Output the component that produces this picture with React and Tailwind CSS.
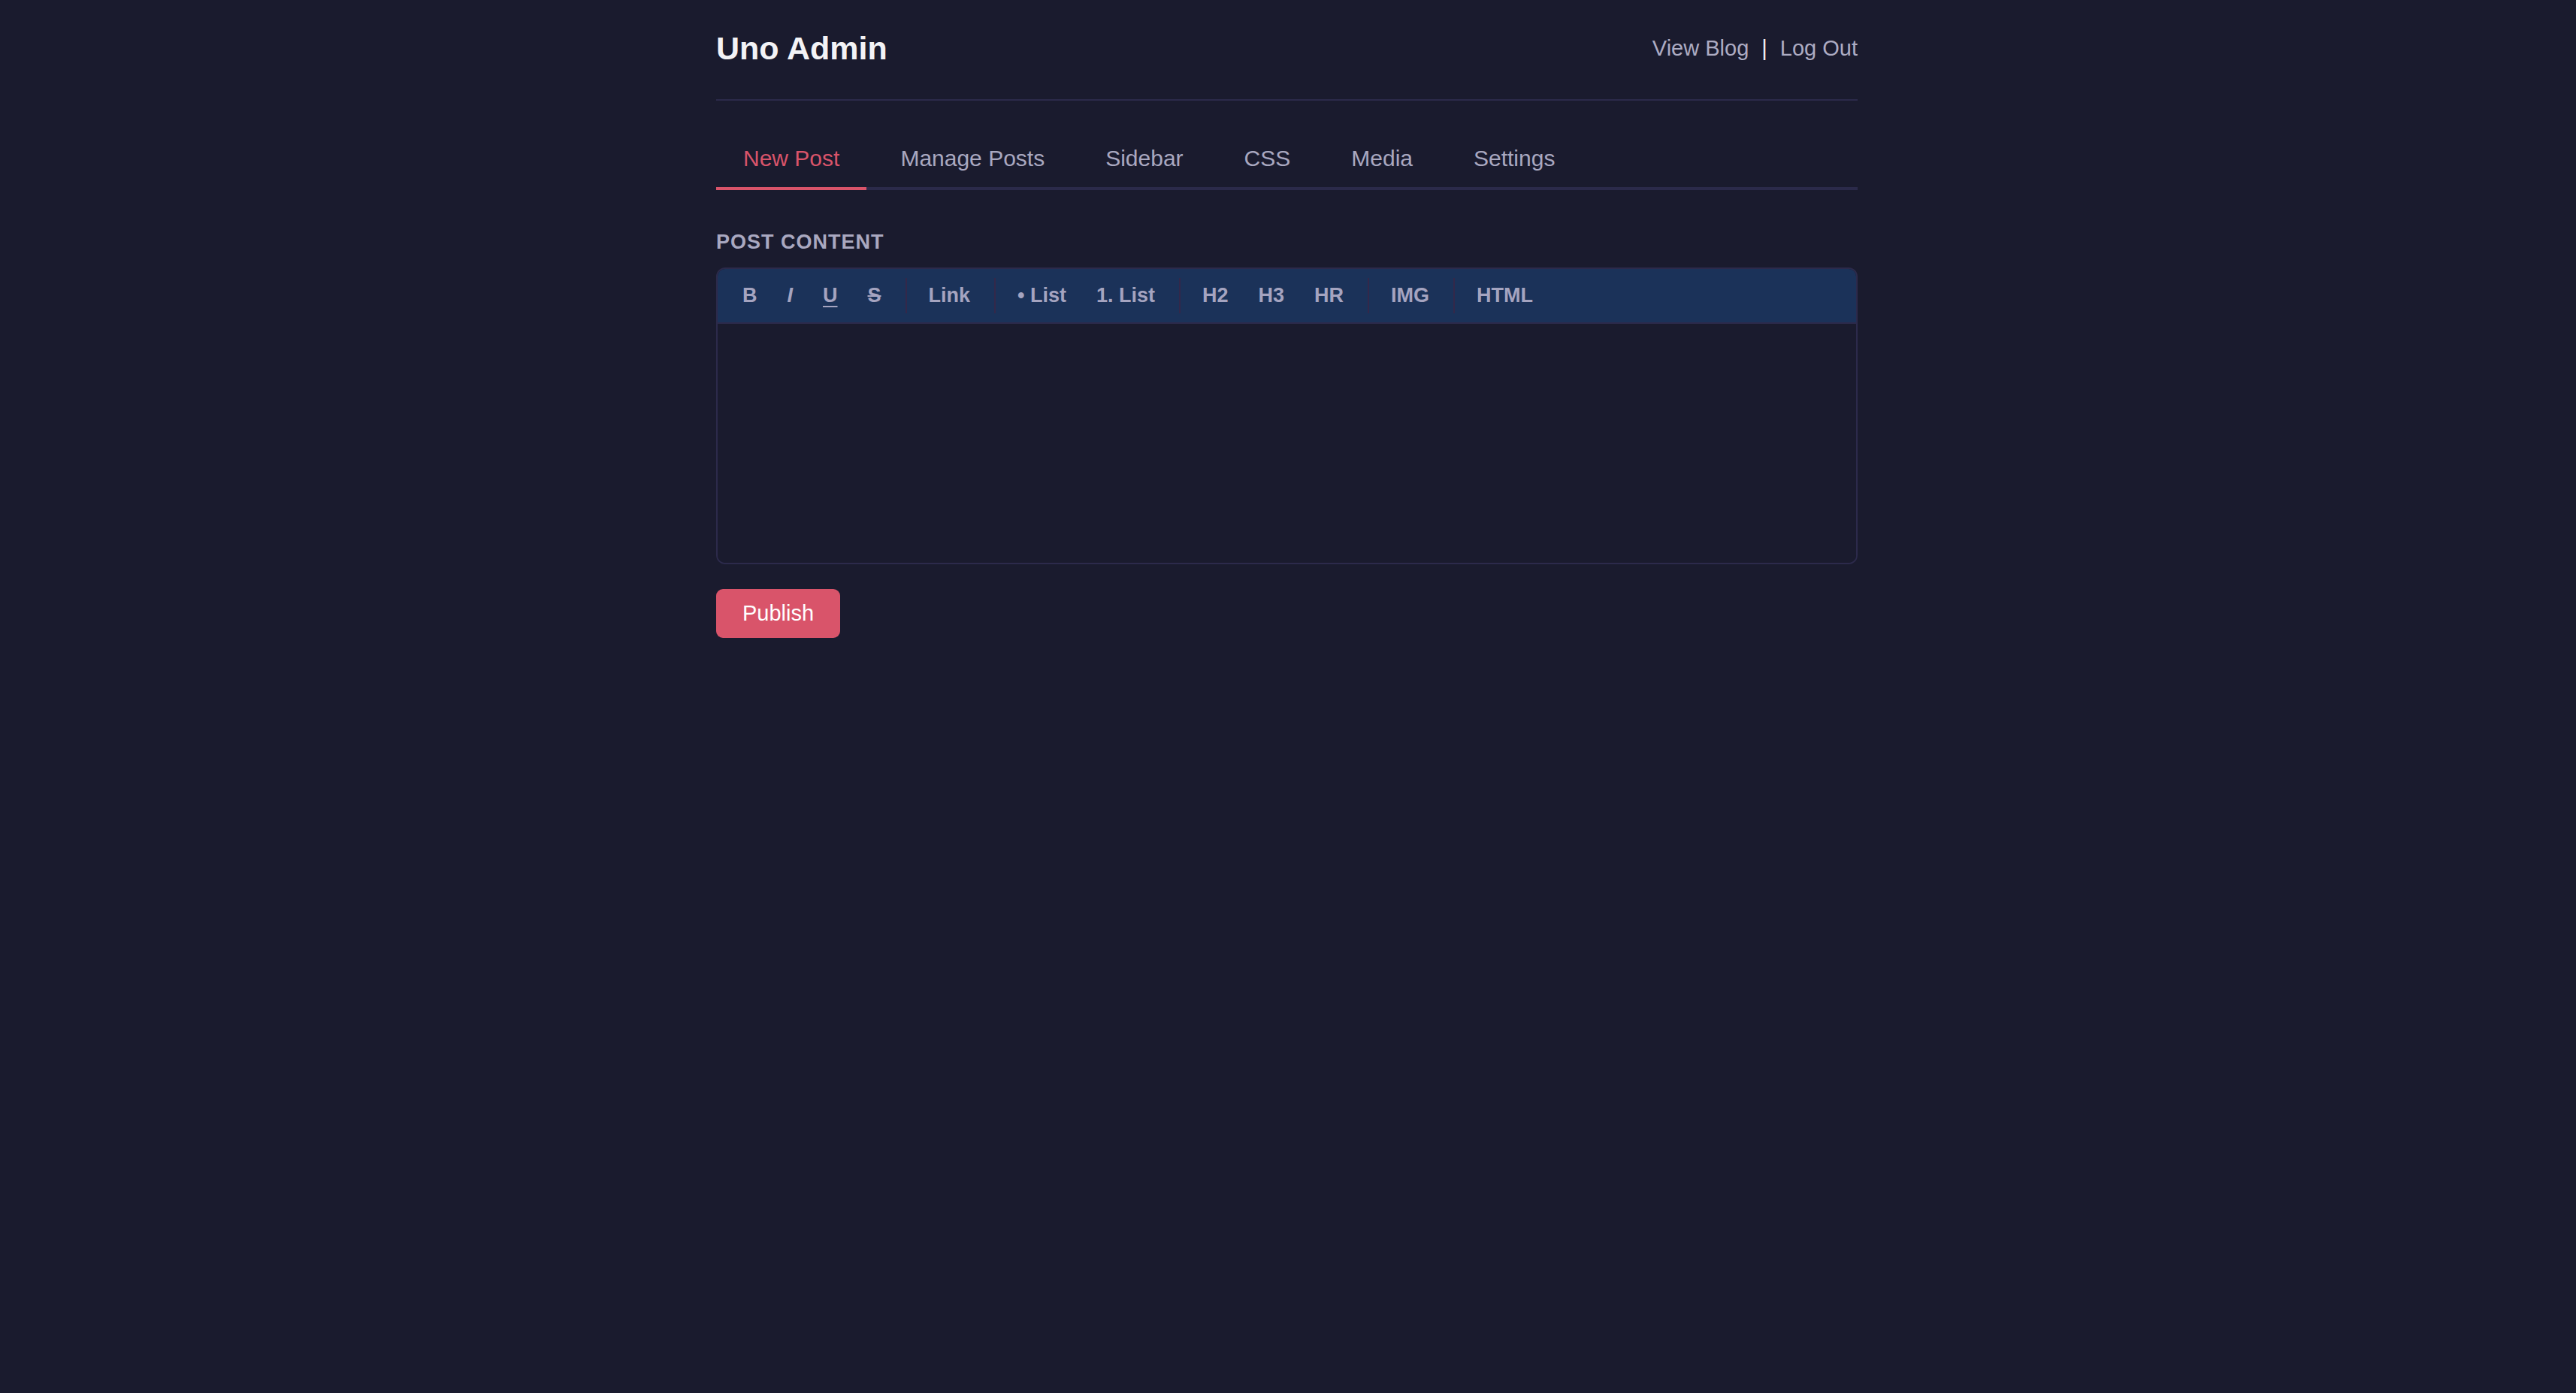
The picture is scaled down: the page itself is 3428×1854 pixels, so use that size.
import React, { useState } from "react";

const tabs = ["New Post", "Manage Posts", "Sidebar", "CSS", "Media", "Settings"];

// toolbar layout: "sep" marks a divider between button groups
const tools = [
  { label: "B", cls: "" },
  { label: "I", cls: "italic" },
  { label: "U", cls: "underline underline-offset-[5px]" },
  { label: "S", cls: "line-through" },
  "sep",
  { label: "Link", cls: "" },
  "sep",
  { label: "• List", cls: "" },
  { label: "1. List", cls: "" },
  "sep",
  { label: "H2", cls: "" },
  { label: "H3", cls: "" },
  { label: "HR", cls: "" },
  "sep",
  { label: "IMG", cls: "" },
  "sep",
  { label: "HTML", cls: "" },
];

const App = () => {
  const [active, setActive] = useState("New Post");
  const [content, setContent] = useState("");

  return (
    <div className="min-h-screen bg-[#1a1b2e] pr-[3px] font-['Liberation_Sans',Arial,sans-serif]">
      <div className="mx-auto w-[1519px]">
        <header className="flex items-center justify-between border-b-2 border-[#2b2a4a] pt-[38px] pb-[42px]">
          <h1 className="text-[43px] font-bold leading-[52px] text-[#f3f3f6]">Uno Admin</h1>
          <div className="flex items-center text-[29px] leading-[36px] text-[#adacc3]">
            <a href="#">View Blog</a>
            <span className="mx-[17px] text-[#f0f0f5]">|</span>
            <a href="#">Log Out</a>
          </div>
        </header>

        <nav className="mt-[39px] flex gap-[9px] border-b-4 border-[#2b2a4a]">
          {tabs.map((t) => (
            <button
              key={t}
              onClick={() => setActive(t)}
              className={
                "-mb-[4px] border-b-4 px-[36px] py-[20px] text-[30px] leading-[36px] " +
                (active === t
                  ? "border-[#d9546a] text-[#d9546a]"
                  : "border-transparent text-[#a9a8c0]")
              }
            >
              {t}
            </button>
          ))}
        </nav>

        <div className="mt-[53px] text-[27px] font-bold uppercase leading-[32px] tracking-[1px] text-[#a9a8c0]">
          Post Content
        </div>

        <div className="mt-[18px] overflow-hidden rounded-[12px] border-2 border-[#2c2a4b]">
          <div className="flex items-center border-b-2 border-[#2c2a4b] bg-[#1b3259] py-[12px] pl-[17px]">
            {tools.map((t, i) =>
              t === "sep" ? (
                <span key={i} className="ml-[8px] mr-[13px] h-[47px] w-[2px] bg-[#33284a]" />
              ) : (
                <button
                  key={i}
                  className={
                    "mr-[8px] px-[16px] py-[8px] text-[27px] font-bold leading-[31px] text-[#a5a4c0] " +
                    t.cls
                  }
                >
                  {t.label}
                </button>
              )
            )}
          </div>
          <textarea
            value={content}
            onChange={(e) => setContent(e.target.value)}
            className="block h-[318px] w-full resize-none bg-[#1a1b2e] p-[30px] text-[30px] text-[#e5e5ee] outline-none"
          />
        </div>

        <button className="mt-[33px] rounded-[9px] bg-[#d9546a] px-[35px] py-[16px] text-[29px] leading-[33px] text-white">
          Publish
        </button>
      </div>
    </div>
  );
};

export default App;
